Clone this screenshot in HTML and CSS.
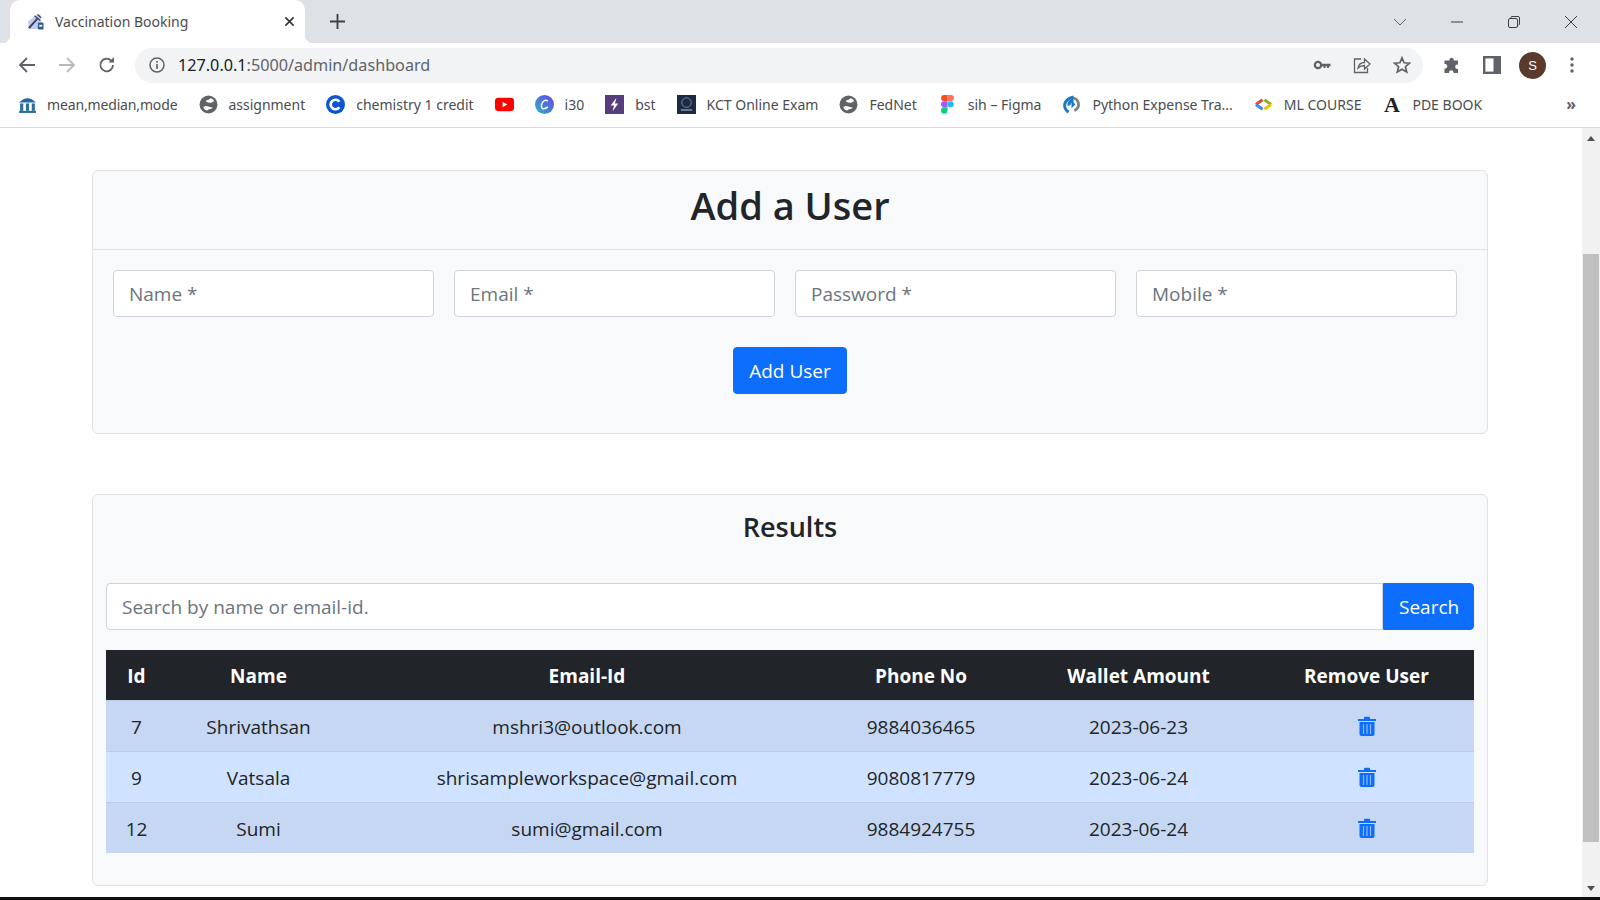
FILE: index.html
```html
<!DOCTYPE html>
<html lang="en">
<head>
    <meta charset="UTF-8">
    <title>Vaccination Booking</title>
    <link rel="stylesheet" href="styles.css">
</head>
<body>
    <!-- Browser tabs -->
    <div class="tabstrip">
        <div class="tab">
            <svg class="tab-icon" viewBox="0 0 18 18"><path d="M9 3 L14 1 L15 9 L17 17 H2 L1 9 Z" fill="#c3cbf0"/><path d="M2 16 L11 6" stroke="#3c4560" stroke-width="2.200"/><path d="M8 3 L14 8 M11 1.500 L15 5" stroke="#3c4560" stroke-width="1.300"/><rect x="11.500" y="10" width="6" height="7.500" rx="1" fill="#2f5f8f"/><rect x="13" y="12.500" width="3" height="2" fill="#fff"/></svg>
            <span class="tab-title">Vaccination Booking</span>
            <svg class="tab-close" viewBox="0 0 12 12"><path d="M1.5 1.5 L10.5 10.5 M10.5 1.5 L1.5 10.5" stroke="#303236" stroke-width="1.7"/></svg>
        </div>
        <svg class="new-tab" viewBox="0 0 14 14"><path d="M7 0 V14 M0 7 H14" stroke="#3c4043" stroke-width="1.7"/></svg>
        <div class="window-controls">
            <svg class="win-icon" viewBox="0 0 14 14"><path d="M1 4 L7 10 L13 4" stroke="#5f6368" fill="none"/></svg>
            <svg class="win-icon" viewBox="0 0 14 14"><path d="M1 7 H13" stroke="#3c4043"/></svg>
            <svg class="win-icon" viewBox="0 0 14 14"><rect x="1.5" y="3.5" width="9" height="9" rx="1.5" stroke="#3c4043" fill="none"/><path d="M4 3 V2.5 Q4 1.5 5 1.5 H11 Q12.5 1.5 12.5 3 V9 Q12.5 10 11.500 10" stroke="#3c4043" fill="none"/></svg>
            <svg class="win-icon" viewBox="0 0 14 14"><path d="M1 1 L13 13 M13 1 L1 13" stroke="#3c4043"/></svg>
        </div>
    </div>

    <!-- Address bar -->
    <div class="toolbar">
        <svg class="nav-icon" viewBox="0 0 18 18"><path d="M17 9 H2 M9 2 L2 9 L9 16" stroke="#5f6368" stroke-width="1.8" fill="none"/></svg>
        <svg class="nav-icon" viewBox="0 0 18 18"><path d="M1 9 H16 M9 2 L16 9 L9 16" stroke="#b6b9bd" stroke-width="1.8" fill="none"/></svg>
        <svg class="nav-icon" viewBox="0 0 18 18"><path d="M15 9 A6.300 6.300 0 1 1 13.200 4.600" stroke="#5f6368" stroke-width="1.8" fill="none"/><path d="M10.500 6.500 H16 V1 Z" fill="#5f6368"/></svg>
        <div class="omnibox">
            <svg class="info-icon" viewBox="0 0 16 16"><circle cx="8" cy="8" r="7" stroke="#5f6368" stroke-width="1.5" fill="none"/><rect x="7.200" y="7" width="1.6" height="5" fill="#5f6368"/><rect x="7.200" y="4" width="1.6" height="1.700" fill="#5f6368"/></svg>
            <span class="url"><span class="url-host">127.0.0.1</span>:5000/admin/dashboard</span>
            <svg class="omni-icon" viewBox="0 0 18 18"><circle cx="5" cy="9" r="3.200" stroke="#5f6368" stroke-width="2.200" fill="none"/><path d="M8 7.800 H17.500 V10.200 H16 V12 H14 V10.200 H12.500 V12 H10.500 V10.200 H8 Z" fill="#5f6368"/></svg>
            <svg class="omni-icon" viewBox="0 0 18 18"><path d="M8 3 H1.500 V16.500 H14.500 V12" stroke="#5f6368" stroke-width="1.300" fill="none"/><path d="M5 12 Q6 6.500 11.500 6.500 V3 L17 8 L11.500 13 V9.500 Q7.500 9.500 5 12 Z" stroke="#5f6368" stroke-width="1.300" fill="none"/></svg>
            <svg class="omni-icon" viewBox="0 0 18 18"><path d="M9 1.800 L11.100 6.800 L16.500 7.200 L12.400 10.700 L13.700 16 L9 13.200 L4.300 16 L5.600 10.700 L1.500 7.200 L6.900 6.800 Z" stroke="#5f6368" stroke-width="1.700" fill="none"/></svg>
        </div>
        <svg class="tool-icon" viewBox="0 0 18 18"><path d="M6.500 3.500 A2.200 2.200 0 0 1 10.800 3.500 V4.500 H15 V8.500 H14 A2.300 2.300 0 0 0 14 13 H15 V17 H10.500 V16 A2.300 2.300 0 0 0 6 16 V17 H1.500 V12.500 H2.500 A2.300 2.300 0 0 0 2.500 8 H1.500 V4.500 H6.500 Z" fill="#5f6368"/></svg>
        <svg class="tool-icon" viewBox="0 0 18 18"><rect x="1.200" y="1.200" width="15.600" height="15.600" stroke="#5f6368" stroke-width="2.400" fill="none"/><rect x="10.500" y="1" width="7" height="16" fill="#5f6368"/></svg>
        <div class="avatar">S</div>
        <svg class="tool-icon menu-dots" viewBox="0 0 18 18"><circle cx="9" cy="3" r="1.700" fill="#5f6368"/><circle cx="9" cy="9" r="1.700" fill="#5f6368"/><circle cx="9" cy="15" r="1.700" fill="#5f6368"/></svg>
    </div>

    <!-- Bookmarks -->
    <div class="bookmarks">
        <div class="bookmark bookmark-first"><svg class="bm-icon" viewBox="0 0 18 18"><path d="M1 7 Q9 -1 17 7 Z" fill="#1f6aa8"/><rect x="2" y="8" width="3" height="7" fill="#2a6f9e"/><rect x="7.500" y="8" width="3" height="7" fill="#2a6f9e"/><rect x="13" y="8" width="3" height="7" fill="#2a6f9e"/><rect x="1" y="15" width="16" height="2" fill="#2a6f9e"/></svg>mean,median,mode</div>
        <div class="bookmark bookmark-globe"><svg class="bm-icon" viewBox="0 0 18 18"><circle cx="9" cy="9" r="8.500" fill="#5f6368"/><path d="M11 3 Q13.500 3.500 14.500 6 L12 7 Q9.500 7.800 7 6.500 Q6 5.800 7 5 Q9.500 4.800 11 3 Z M4 11.500 Q6.500 9.800 9 11 Q11.500 12 13 11.300 L11.500 13.300 Q8.500 13 8 14.800 Q5.200 14.500 4 11.500 Z" fill="#fff"/></svg>assignment</div>
        <div class="bookmark"><svg class="bm-icon" viewBox="0 0 20 20"><circle cx="10" cy="10" r="10" fill="#0b57d0"/><path d="M14 7.200 A5 5 0 1 0 14 12.800" stroke="#fff" stroke-width="2.800" fill="none"/></svg>chemistry 1 credit</div>
        <div class="bookmark bookmark-icononly"><svg class="bm-icon yt" viewBox="0 0 20 14"><rect width="20" height="14" rx="3.500" fill="#f00"/><path d="M8 4 L13 7 L8 10 Z" fill="#fff"/></svg></div>
        <div class="bookmark"><svg class="bm-icon" viewBox="0 0 20 20"><defs><linearGradient id="canva" x1="0" y1="1" x2="1" y2="0"><stop offset="0" stop-color="#2bb7c9"/><stop offset="1" stop-color="#6a3fe0"/></linearGradient></defs><circle cx="10" cy="10" r="10" fill="url(#canva)"/><path d="M13.500 6.500 Q11 4.500 8.500 7 Q5.500 11 7.500 14 Q10 15.500 13.500 12.500" stroke="#fff" stroke-width="1.500" fill="none"/></svg>i30</div>
        <div class="bookmark"><svg class="bm-icon" viewBox="0 0 20 20"><rect width="20" height="20" fill="#563d7c"/><path d="M12 3 L6 11 H9.500 L8 17 L14 9 H10.500 Z" fill="#fff"/></svg>bst</div>
        <div class="bookmark"><svg class="bm-icon" viewBox="0 0 20 20"><rect width="20" height="20" fill="#1c2a44"/><circle cx="10" cy="8" r="5" stroke="#7f8aa0" fill="none"/><rect x="4" y="15" width="12" height="1.500" fill="#8f99ad"/></svg>KCT Online Exam</div>
        <div class="bookmark"><svg class="bm-icon" viewBox="0 0 18 18"><circle cx="9" cy="9" r="8.500" fill="#5f6368"/><path d="M11 3 Q13.500 3.500 14.500 6 L12 7 Q9.500 7.800 7 6.500 Q6 5.800 7 5 Q9.500 4.800 11 3 Z M4 11.500 Q6.500 9.800 9 11 Q11.500 12 13 11.300 L11.500 13.300 Q8.500 13 8 14.800 Q5.200 14.500 4 11.500 Z" fill="#fff"/></svg>FedNet</div>
        <div class="bookmark"><svg class="bm-icon" viewBox="0 0 14 20"><path d="M3.500 0 H7 V6.500 H3.500 A3.250 3.250 0 0 1 3.500 0 Z" fill="#f24e1e"/><path d="M7 0 H10.500 A3.250 3.250 0 0 1 10.500 6.500 H7 Z" fill="#ff7262"/><path d="M3.500 6.500 H7 V13 H3.500 A3.250 3.250 0 0 1 3.500 6.500 Z" fill="#a259ff"/><circle cx="10.300" cy="9.750" r="3.250" fill="#1abcfe"/><path d="M3.500 13 H7 V16.500 A3.400 3.400 0 1 1 3.500 13 Z" fill="#0acf83"/></svg>sih – Figma</div>
        <div class="bookmark"><svg class="bm-icon" viewBox="0 0 20 20"><path d="M10 3 A7 7 0 0 1 13 16.500" stroke="#7c8187" stroke-width="3" fill="none"/><path d="M7 18 A8 8 0 0 1 3 9 Q5 4 10.500 2.500 V6 Q6.500 8 7.500 11" stroke="#1b79c4" stroke-width="3.200" fill="none"/><path d="M10 5 L14 10 L10 14 Z" fill="#1b79c4"/></svg>Python Expense Tra...</div>
        <div class="bookmark"><svg class="bm-icon" viewBox="0 0 20 14"><path d="M9 2 L2 7" stroke="#ea4335" stroke-width="3"/><path d="M2 7 L9 12" stroke="#4285f4" stroke-width="3"/><path d="M11 2 L18 7" stroke="#8ab024" stroke-width="3"/><path d="M18 7 L11 12" stroke="#fbbc04" stroke-width="3"/></svg>ML COURSE</div>
        <div class="bookmark"><span class="bm-letter">A</span>PDE BOOK</div>
        <span class="bm-more">»</span>
    </div>

    <div class="viewport">
        <main class="page">
            <section class="card card-add">
                <div class="card-header"><h1>Add a User</h1></div>
                <form class="card-body">
                    <div class="field-row">
                        <input class="field" type="text" placeholder="Name *">
                        <input class="field" type="email" placeholder="Email *">
                        <input class="field" type="password" placeholder="Password *">
                        <input class="field" type="text" placeholder="Mobile *">
                    </div>
                    <button class="btn" type="button">Add User</button>
                </form>
            </section>

            <section class="card card-results">
                <h2>Results</h2>
                <div class="search-group">
                    <input class="field search-input" type="text" placeholder="Search by name or email-id.">
                    <button class="btn search-btn" type="button">Search</button>
                </div>
                <table class="users">
                    <colgroup>
                        <col class="col-id"><col class="col-name"><col class="col-email"><col class="col-phone"><col class="col-wallet"><col class="col-remove">
                    </colgroup>
                    <thead>
                        <tr><th>Id</th><th>Name</th><th>Email-Id</th><th>Phone No</th><th>Wallet Amount</th><th>Remove User</th></tr>
                    </thead>
                    <tbody>
                        <tr class="odd">
                            <td>7</td><td>Shrivathsan</td><td>mshri3@outlook.com</td><td>9884036465</td><td>2023-06-23</td>
                            <td><svg class="trash" viewBox="0 0 18 20"><path d="M0 3 H6 V2 Q6 .8 7 .8 H11 Q12 .8 12 2 V3 H18 V5 H0 Z M1.500 6 H16.500 V18 Q16.500 20 14.500 20 H3.500 Q1.500 20 1.500 18 Z" fill="#0d6efd"/><path d="M5.500 8 V18 M9 8 V18 M12.500 8 V18" stroke="#8fb8f8" stroke-width="1.200"/></svg></td>
                        </tr>
                        <tr>
                            <td>9</td><td>Vatsala</td><td>shrisampleworkspace@gmail.com</td><td>9080817779</td><td>2023-06-24</td>
                            <td><svg class="trash" viewBox="0 0 18 20"><path d="M0 3 H6 V2 Q6 .8 7 .8 H11 Q12 .8 12 2 V3 H18 V5 H0 Z M1.500 6 H16.500 V18 Q16.500 20 14.500 20 H3.500 Q1.500 20 1.500 18 Z" fill="#0d6efd"/><path d="M5.500 8 V18 M9 8 V18 M12.500 8 V18" stroke="#8fb8f8" stroke-width="1.200"/></svg></td>
                        </tr>
                        <tr class="odd">
                            <td>12</td><td>Sumi</td><td>sumi@gmail.com</td><td>9884924755</td><td>2023-06-24</td>
                            <td><svg class="trash" viewBox="0 0 18 20"><path d="M0 3 H6 V2 Q6 .8 7 .8 H11 Q12 .8 12 2 V3 H18 V5 H0 Z M1.500 6 H16.500 V18 Q16.500 20 14.500 20 H3.500 Q1.500 20 1.500 18 Z" fill="#0d6efd"/><path d="M5.500 8 V18 M9 8 V18 M12.500 8 V18" stroke="#8fb8f8" stroke-width="1.200"/></svg></td>
                        </tr>
                    </tbody>
                </table>
            </section>
        </main>
        <div class="scrollbar">
            <span class="arrow-up"></span>
            <div class="scroll-track"><div class="scroll-thumb"></div></div>
            <span class="arrow-down"></span>
        </div>
    </div>
    <div class="taskbar-edge"></div>
</body>
</html>
```

FILE: styles.css
```css
* {
    box-sizing: border-box;
}

body {
    margin: 0;
    width: 1600px;
    height: 900px;
    overflow: hidden;
    display: flex;
    flex-direction: column;
    font-family: 'Open Sans', 'Noto Sans', sans-serif;
    background-color: #fff;
    color: #212529;
}

/* Browser chrome */

.tabstrip {
    height: 43px;
    flex: none;
    display: flex;
    align-items: center;
    background-color: #dee1e6;
    padding-left: 10px;
}

.tab {
    position: relative;
    width: 295px;
    height: 43px;
    display: flex;
    align-items: center;
    background-color: #fff;
    border-radius: 10px 10px 0 0;
    padding: 0 10px 0 17px;
}

/* little flares at the foot of the active tab */
.tab::before,
.tab::after {
    content: "";
    position: absolute;
    bottom: 0;
    width: 8px;
    height: 8px;
}

.tab::before {
    left: -8px;
    background: radial-gradient(circle at 0 0, transparent 8px, #fff 8.5px);
}

.tab::after {
    right: -8px;
    background: radial-gradient(circle at 100% 0, transparent 8px, #fff 8.5px);
}

.tab-icon {
    width: 17px;
    height: 17px;
    flex: none;
}

.tab-title {
    flex: 1;
    margin-left: 11px;
    font-family: 'Noto Sans', sans-serif;
    font-size: 14px;
    color: #4a4d51;
}

.tab-close {
    width: 11px;
    height: 11px;
}

.new-tab {
    width: 15px;
    height: 15px;
    margin-left: 25px;
}

.window-controls {
    margin-left: auto;
    display: flex;
    align-items: center;
    gap: 43px;
    padding-right: 22px;
}

.win-icon {
    width: 14px;
    height: 14px;
}

.toolbar {
    height: 44px;
    flex: none;
    display: flex;
    align-items: center;
    padding-left: 18px;
    background-color: #fff;
}

.nav-icon {
    width: 18px;
    height: 18px;
    margin-right: 22px;
    flex: none;
}

.omnibox {
    width: 1288px;
    height: 35px;
    margin-left: -3px;
    flex: none;
    display: flex;
    align-items: center;
    background-color: #f1f3f4;
    border-radius: 18px;
    padding: 0 12px 0 14px;
}

.info-icon {
    width: 16px;
    height: 16px;
    flex: none;
}

.url {
    flex: 1;
    margin-left: 13px;
    font-family: 'Noto Sans', sans-serif;
    font-size: 16.2px;
    color: #5f6368;
}

.url-host {
    color: #202124;
}

.omni-icon {
    width: 18px;
    height: 18px;
    margin-left: 22px;
}

.tool-icon {
    width: 18px;
    height: 18px;
    margin-left: 22px;
    flex: none;
}

.omnibox + .tool-icon {
    margin-left: 20px;
}

.avatar {
    width: 27px;
    height: 27px;
    margin-left: 18px;
    flex: none;
    border-radius: 50%;
    background-color: #5b3a2e;
    color: #fff;
    font-family: 'Liberation Sans', sans-serif;
    font-size: 13px;
    display: flex;
    align-items: center;
    justify-content: center;
}

.tool-icon.menu-dots {
    margin-left: 17px;
}

.bookmarks {
    height: 41px;
    flex: none;
    display: flex;
    align-items: center;
    padding: 0 0 6px 18px;
    gap: 21px;
    border-bottom: 1px solid #d9dadc;
    background-color: #fff;
    font-family: 'Noto Sans', sans-serif;
    font-size: 14px;
    color: #4a4d51;
}

.bookmark {
    display: flex;
    align-items: center;
    gap: 11px;
    white-space: nowrap;
}

.bookmark-first {
    gap: 10px;
    letter-spacing: -0.15px;
    margin-right: 1px;
}

.bookmark-globe {
    gap: 10px;
}

.bm-icon {
    width: 19px;
    height: 19px;
    flex: none;
}

.bm-letter {
    width: 19px;
    font-family: 'Liberation Serif', serif;
    font-weight: bold;
    font-size: 22px;
    line-height: 19px;
    color: #202124;
    text-align: center;
}

.bm-more {
    margin-left: auto;
    padding-right: 24px;
    font-size: 16px;
    font-weight: bold;
    color: #5f6368;
}

/* Page */

.viewport {
    flex: 1;
    min-height: 0;
    display: flex;
}

.page {
    flex: 1;
    min-width: 0;
    padding: 42px 0 0 92px;
}

.card {
    width: 1396px;
    background-color: #f8f9fa;
    border: 1px solid #dfe1e4;
    border-radius: 6px;
}

.card-add {
    height: 264px;
    margin-bottom: 60px;
}

.card-header {
    height: 79px;
    padding-bottom: 8px;
    border-bottom: 1px solid #dfe1e4;
    display: flex;
    align-items: center;
    justify-content: center;
}

h1 {
    margin: 0;
    font-size: 38px;
    font-weight: 600;
    line-height: 1.2;
}

.card-body {
    display: flex;
    flex-direction: column;
    align-items: center;
    padding-top: 20px;
}

.field-row {
    width: 100%;
    padding: 0 30px 0 20px;
    display: grid;
    grid-template-columns: repeat(4, 1fr);
    gap: 20px;
}

.field {
    height: 47px;
    width: 100%;
    padding: 0 15px;
    background-color: #fff;
    border: 1px solid #ced4da;
    border-radius: 4px;
    font-family: inherit;
    font-size: 19px;
    color: #212529;
}

.field::placeholder {
    color: #6c757d;
    opacity: 1;
}

.btn {
    height: 47px;
    padding: 0 15px;
    margin-top: 30px;
    background-color: #0d6efd;
    border: 1px solid #0d6efd;
    border-radius: 4px;
    color: #fff;
    font-family: inherit;
    font-size: 19px;
}

.card-results {
    height: 392px;
    padding: 0 13px;
}

h2 {
    margin: 0;
    padding-top: 12px;
    height: 88px;
    font-size: 27px;
    font-weight: 600;
    line-height: 1.5;
    text-align: center;
}

.search-group {
    display: flex;
    margin-bottom: 20px;
}

.search-input {
    flex: 1;
    border-radius: 4px 0 0 4px;
}

.search-btn {
    margin-top: 0;
    width: 91px;
    border-radius: 0 4px 4px 0;
}

.users {
    width: 100%;
    table-layout: fixed;
    border-collapse: collapse;
    font-size: 19px;
    text-align: center;
}

.col-id { width: 61px; }
.col-name { width: 183px; }
.col-email { width: 474px; }
.col-phone { width: 194px; }
.col-wallet { width: 241px; }
.col-remove { width: 215px; }

.users th {
    height: 50px;
    padding: 2px 0 0;
    background-color: #212529;
    color: #fff;
    font-weight: 700;
}

.users td {
    height: 51px;
    padding: 2px 0 0;
    background-color: #cfe2ff;
    border-top: 1px solid #bacbe6;
}

.users .odd td {
    background-color: #c5d7f2;
}

.trash {
    width: 18px;
    height: 20px;
    display: block;
    margin: 0 auto;
    position: relative;
    top: -1px;
}

/* Scrollbar */

.scrollbar {
    width: 18px;
    flex: none;
    display: flex;
    flex-direction: column;
    align-items: center;
    background-color: #f1f1f1;
    padding-top: 8px;
}

.arrow-up {
    border: 4.5px solid transparent;
    border-top: 0;
    border-bottom: 5px solid #505050;
}

.scroll-track {
    flex: 1;
    width: 100%;
    padding: 113px 1px 0;
}

.scroll-thumb {
    height: 588px;
    background-color: #c1c1c1;
}

.arrow-down {
    border: 4.5px solid transparent;
    border-bottom: 0;
    border-top: 5px solid #505050;
    margin-bottom: 6px;
}

.taskbar-edge {
    height: 3px;
    flex: none;
    background-color: #111;
}
```
